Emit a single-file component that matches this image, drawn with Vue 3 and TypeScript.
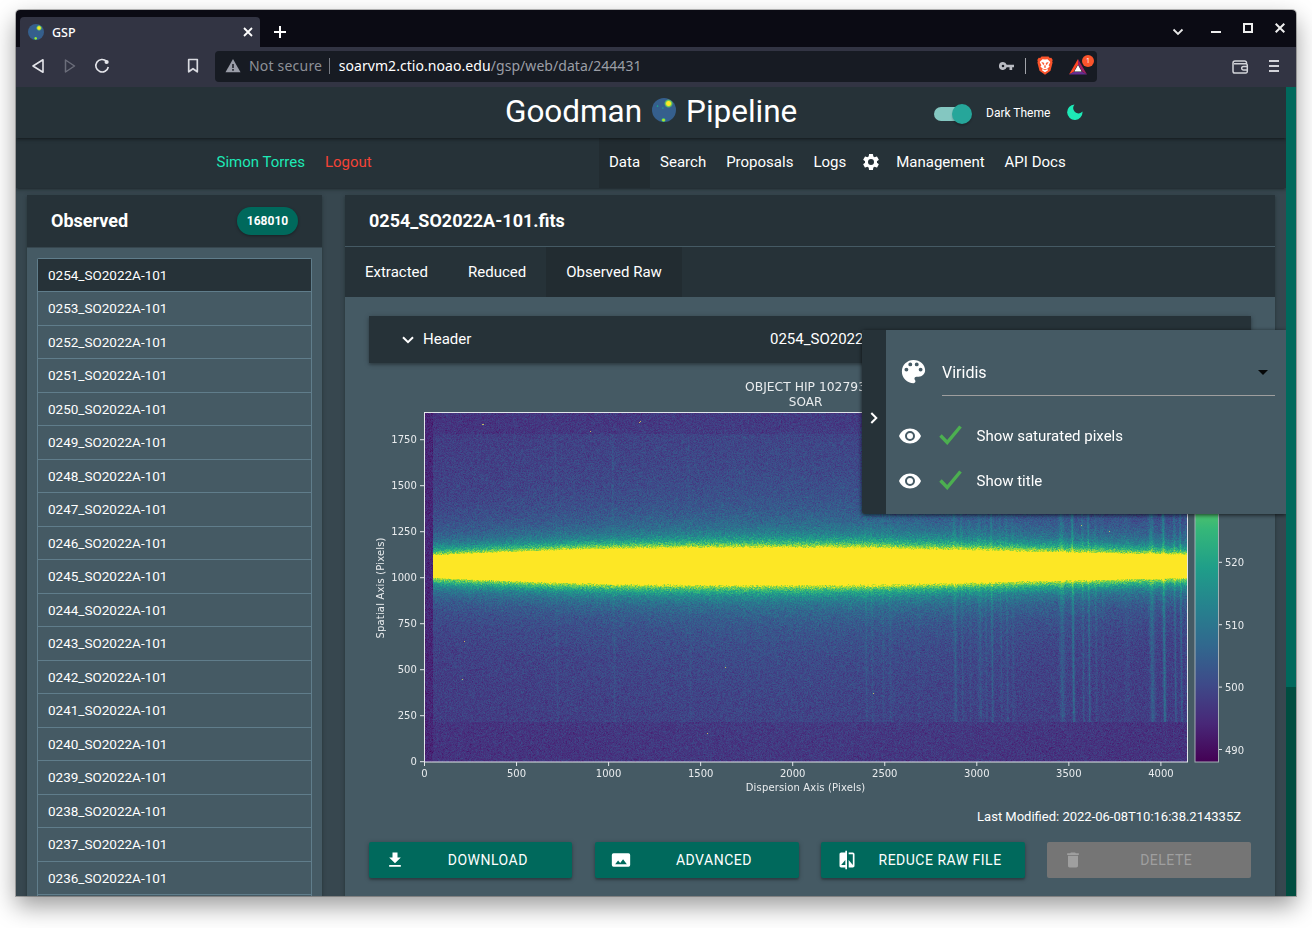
<script setup lang="ts">
import { onMounted, ref } from 'vue'

const files: string[] = Array.from({ length: 20 }, (_, i) => `0${254 - i}_SO2022A-101`)
const links = ['Data', 'Search', 'Proposals', 'Logs']
const tabs = ['Extracted', 'Reduced', 'Observed Raw']
const options = ['Show saturated pixels', 'Show title']

const xTicks = [0, 500, 1000, 1500, 2000, 2500, 3000, 3500, 4000].map((v) => ({ v, x: 55.5 + v * 0.1841 }))
const yTicks = [0, 250, 500, 750, 1000, 1250, 1500, 1750].map((v) => ({ v, y: 391.7 - v * 0.184 }))
const barTicks = [490, 500, 510, 520].map((v) => ({ v, y: 379.5 - (v - 490) * 6.24 }))

const viridis: number[][] = [
  [68, 1, 84], [72, 40, 120], [62, 74, 137], [49, 104, 142], [38, 130, 142],
  [31, 158, 137], [53, 183, 121], [109, 205, 89], [180, 222, 44], [253, 231, 37],
]
const stops = viridis.map((c, i) => ({ offset: i / 9, color: `rgb(${c.join(',')})` }))

// Sky lines: column, strength, half width
const skyLines: number[][] = [
  [132, 1.4, 1], [189, 1.5, 1.2], [265, 0.9, 1], [320, 0.6, 1], [441, 2, 1], [447, 1.8, 1],
  [458, 1.5, 1], [465, 1.5, 1.5], [493, 1, 1], [530, 3.4, 1.5], [537, 2.2, 1], [545, 1.5, 1],
  [555, 2.4, 2], [561, 2, 1], [567, 4.2, 1], [576, 2, 1], [582, 2.4, 1], [588, 1.8, 1],
  [637, 4, 2.4], [648, 6.6, 1.2], [658, 3, 1], [664, 4.8, 1], [671, 2.5, 1], [678, 1.3, 1],
  [702, 1, 3], [727, 4.8, 2.4], [739, 7.2, 1.4], [750, 4.4, 1], [756, 4.8, 1], [761, 1.5, 1],
]
const hotPixels: number[][] = [[57, 11], [58, 11], [165, 18], [215, 8], [214, 9], [39, 228], [37, 266], [448, 280], [656, 112], [684, 118], [300, 254], [282, 320]]

const canvas = ref<HTMLCanvasElement | null>(null)

onMounted(() => {
  const el = canvas.value
  const ctx = el?.getContext('2d')
  if (!el || !ctx) return
  const w = el.width
  const h = el.height
  let seed = 20220608
  const rnd = () => {
    seed = (seed * 1664525 + 1013904223) >>> 0
    return seed / 4294967296
  }
  const img = ctx.createImageData(w, h)
  for (let y = 0; y < h; y++) {
    const lit = y > 20 && y < 309
    for (let x = 0; x < w; x++) {
      const u = x / w
      const gauss = rnd() + rnd() + rnd() + rnd() - 2
      let v = 494
      let spread = 2.8
      if (x > 7) {
        const bell = Math.exp(-Math.pow((u - 0.5) / 0.4, 2))
        const half = x < 420 ? 11 + 7 * Math.sin((Math.min(x, 260) / 260) * Math.PI / 2)
          : 18 - 6.5 * Math.pow((x - 420) / 342, 1.1)
        const d = Math.abs(y - 153) - half
        v = (lit ? 497.4 : 495.8) + 0.6 * bell
        if (d <= 0) v = 580
        else {
          const glow = 25 * Math.exp(-d / 5.5) + (15 + 4 * bell) * Math.exp(-d / 19) + (1 + 4.5 * bell) * Math.exp(-d / 90)
          v += glow
          spread += glow * 0.1
        }
        if (lit) {
          const drift = (y - 150) / 110 - 1
          for (const [lx, s, hw] of skyLines) {
            const q = (x - lx - drift) / hw
            if (q > -3 && q < 3) v += s * 1.3 * Math.exp(-q * q)
          }
        }
      }
      const t = Math.min(1, Math.max(0, (v + gauss * spread - 488) / 56)) * 9
      const i = Math.min(8, Math.floor(t))
      const f = t - i
      const p = (y * w + x) * 4
      for (let k = 0; k < 3; k++) img.data[p + k] = viridis[i][k] + (viridis[i + 1][k] - viridis[i][k]) * f
      img.data[p + 3] = 255
    }
  }
  ctx.putImageData(img, 0, 0)
  ctx.fillStyle = 'rgba(226, 214, 90, .8)'
  for (const [x, y] of hotPixels) ctx.fillRect(x, y, 1, 1)
})
</script>

<template>
  <div class="desktop">
    <div class="window">
      <div class="strip">
        <div class="tab">
          <span class="orb small"></span>
          <span class="tab-name">GSP</span>
          <svg class="tab-close" width="10" height="10" viewBox="0 0 10 10"><path d="M1 1l8 8M9 1l-8 8" stroke="#fff" stroke-width="1.8" /></svg>
        </div>
        <svg class="plus" width="12" height="12" viewBox="0 0 12 12"><path d="M6 0v12M0 6h12" stroke="#fff" stroke-width="2" /></svg>
        <div class="controls">
          <svg width="12" height="8" viewBox="0 0 12 8" class="c-down"><path d="M1.5 1.5L6 6l4.500-4.500" stroke="#e8e8e8" stroke-width="1.8" fill="none" /></svg>
          <svg width="10" height="12" viewBox="0 0 10 12" class="c-min"><path d="M0 10h10" stroke="#eee" stroke-width="2" /></svg>
          <svg width="10" height="10" viewBox="0 0 10 10" class="c-max"><rect x="1" y="1" width="8" height="8" stroke="#eee" stroke-width="2" fill="none" /></svg>
          <svg width="10" height="10" viewBox="0 0 10 10" class="c-x"><path d="M.7.7l8.600 8.600M9.300.7L.7 9.300" stroke="#eee" stroke-width="2" /></svg>
        </div>
      </div>

      <div class="toolbar">
        <div class="nav-icons">
          <svg width="14" height="16" viewBox="0 0 14 16"><path d="M12 1.800v12.400L2 8z" fill="none" stroke="#e4e5ea" stroke-width="1.600" stroke-linejoin="round" /></svg>
          <svg width="14" height="16" viewBox="0 0 14 16"><path d="M2.500 2v12l9-6z" fill="none" stroke="#6b6d7a" stroke-width="1.500" stroke-linejoin="round" /></svg>
          <svg width="16" height="16" viewBox="0 0 16 16"><path d="M12.500 3.200A6.300 6.300 0 1 0 14.300 9" fill="none" stroke="#e4e5ea" stroke-width="1.600" /><circle cx="12.600" cy="4" r="2.100" fill="#e4e5ea" /></svg>
        </div>
        <svg class="bookmark" width="12" height="16" viewBox="0 0 12 16"><path d="M1.700 1.500h8.600v12.300L6 10.700l-4.300 3.100z" fill="none" stroke="#d9dae0" stroke-width="1.700" stroke-linejoin="round" /></svg>
        <div class="address">
          <svg width="16" height="14" viewBox="0 0 16 14"><path d="M8 0l7.500 13.300H.5z" fill="#9a9da8" /><path d="M8 5v4M8 10v1.700" stroke="#171b23" stroke-width="1.500" /></svg>
          <span class="insecure">Not secure</span>
          <i class="sep"></i>
          <span class="url"><b>soarvm2.ctio.noao.edu</b>/gsp/web/data/244431</span>
          <svg class="key" width="16" height="10" viewBox="0 0 16 10"><path fill="#b9bbc2" fill-rule="evenodd" d="M4 1a4 4 0 1 0 3.700 5.300H10.500V9h2.700V6.300H15V3.700H7.700A4 4 0 0 0 4 1zm0 2.700a1.300 1.300 0 1 1 0 2.600 1.300 1.300 0 0 1 0-2.600z" /></svg>
          <i class="sep light"></i>
          <svg class="lion" width="16" height="19" viewBox="0 0 16 19"><path d="M4.500.5h7l1.300 1.400 1.500-.1L15.700 4l-.5 1.500.4 1-2.100 8.200-5.500 4-5.500-4L.4 6.500l.4-1L.3 4l1.400-2.200 1.500.1z" fill="#fb542b" /><path d="M8 3.600l2.500-.4 2.800 2.700-1.700 3.400 1 1.500-2.400 1.800.8 1.600L8 16.200l-3-2 .8-1.600-2.400-1.800 1-1.500L2.700 5.900l2.800-2.700z" fill="#fff" /><path d="M4.700 6.300l2.300.8-.4 2zM11.300 6.300L9 7.100l.4 2zM8 9l.7 2.100L8 12l-.7-.9zM6 13l2 .9 2-.9" fill="#fb542b" stroke="#fb542b" stroke-width=".4" /></svg>
          <span class="bat">
            <svg width="18" height="16" viewBox="0 0 18 16"><path d="M9 0L0 15.500l4.500-2.500L9 5.200z" fill="#ff4724" /><path d="M9 0l9 15.500-4.500-2.500L9 5.200z" fill="#9e1f63" /><path d="M0 15.500h18L13.500 13h-9z" fill="#662d91" /><path d="M9 6l3.700 6.500H5.300z" fill="#fff" /></svg>
            <em>1</em>
          </span>
        </div>
        <svg class="wallet" width="17" height="14" viewBox="0 0 17 14"><g fill="none" stroke="#d2d3d9" stroke-width="1.500"><path d="M14.500 4V2.800A1.800 1.800 0 0 0 12.700 1H3a2 2 0 0 0-2 2v8.200A1.800 1.800 0 0 0 2.800 13h11a1.500 1.500 0 0 0 1.500-1.500V5.300A1.500 1.500 0 0 0 13.800 3.800H2" /><path d="M15.500 6.500h-4a1.800 1.800 0 0 0 0 3.600h4" /></g></svg>
        <svg class="menu" width="10" height="12" viewBox="0 0 10 12"><path d="M0 1h10M0 6h10M0 11h10" stroke="#d2d3d9" stroke-width="1.800" /></svg>
      </div>

      <div class="page">
        <div class="content">
          <header class="brand">
            <h1><span>Goodman</span><span class="orb"></span><span>Pipeline</span></h1>
            <div class="theme">
              <span class="switch"><span class="knob"></span></span>
              <span>Dark Theme</span>
              <svg class="moon" width="16" height="16" viewBox="0 0 16 16"><path d="M7.500.5A5 5 0 0 0 15.500 7.600 7.700 7.700 0 1 1 7.500.5z" fill="#1de9b6" /></svg>
            </div>
          </header>
          <nav class="menu-bar">
            <a class="user">Simon Torres</a>
            <a class="logout">Logout</a>
            <div class="links">
              <a v-for="(l, i) in links" :key="l" :class="{ active: i === 0 }">{{ l }}</a>
              <svg class="gear" width="20" height="20" viewBox="0 0 24 24"><path fill="#fff" d="M19.140 12.940c.04-.3.060-.61.060-.94 0-.32-.02-.64-.07-.94l2.030-1.580a.49.49 0 0 0 .12-.61l-1.920-3.320a.488.488 0 0 0-.59-.22l-2.390.96c-.5-.38-1.030-.7-1.620-.94l-.36-2.540a.484.484 0 0 0-.48-.41h-3.840c-.24 0-.43.17-.47.41l-.36 2.540c-.59.24-1.130.57-1.620.94l-2.390-.96c-.22-.08-.47 0-.59.22L2.740 8.870c-.12.21-.08.47.12.61l2.030 1.580c-.05.3-.09.63-.09.94s.02.64.07.94l-2.030 1.580a.49.49 0 0 0-.12.61l1.920 3.320c.12.22.37.29.59.22l2.390-.96c.5.38 1.030.7 1.620.94l.36 2.540c.05.24.24.41.48.41h3.840c.24 0 .44-.17.47-.41l.36-2.540c.59-.24 1.130-.56 1.620-.94l2.390.96c.22.08.47 0 .59-.22l1.920-3.320c.12-.22.07-.47-.12-.61l-2.010-1.580zM12 15.600A3.600 3.600 0 1 1 12 8.400a3.600 3.600 0 0 1 0 7.200z" /></svg>
              <a>Management</a>
              <a>API Docs</a>
            </div>
          </nav>

          <main class="columns">
            <aside class="card side">
              <div class="side-head"><h2>Observed</h2><span class="badge">168010</span></div>
              <ul>
                <li v-for="(f, i) in files" :key="f" :class="{ current: i === 0 }">{{ f }}</li>
              </ul>
            </aside>

            <section class="card detail">
              <h2 class="detail-head">0254_SO2022A-101.fits</h2>
              <div class="tabs"><a v-for="(t, i) in tabs" :key="t" :class="{ active: i === 2 }">{{ t }}</a></div>
              <div class="detail-body">
                <div class="collapse">
                  <svg width="12" height="8" viewBox="0 0 12 8"><path d="M1 1.200l5 5 5-5" stroke="#fff" stroke-width="2" fill="none" /></svg>
                  <span>Header</span>
                  <span class="file">0254_SO2022A-101.fits</span>
                </div>
                <div class="figure">
                  <canvas ref="canvas" width="762" height="349"></canvas>
                  <svg class="axes" width="882" height="430" viewBox="0 0 882 430">
                    <defs><linearGradient id="viridis" x1="0" y1="1" x2="0" y2="0"><stop v-for="s in stops" :key="s.offset" :offset="s.offset" :stop-color="s.color" /></linearGradient></defs>
                    <text class="title" x="436.500" y="20.500" textLength="121" lengthAdjust="spacingAndGlyphs" text-anchor="middle">OBJECT HIP 102793</text>
                    <text class="title" x="436.500" y="36" textLength="33.500" lengthAdjust="spacingAndGlyphs" text-anchor="middle">SOAR</text>
                    <rect x="55.500" y="42.500" width="763" height="349.500" fill="none" stroke="#e3e6ea" stroke-width="1" />
                    <g v-for="t in xTicks" :key="'x' + t.v"><path :d="`M${t.x} 392v4`" stroke="#e3e6ea" /><text :x="t.x" y="407" text-anchor="middle">{{ t.v }}</text></g>
                    <g v-for="t in yTicks" :key="'y' + t.v"><path :d="`M55 ${t.y}h-4`" stroke="#e3e6ea" /><text :x="47.800" :y="t.y + 3.700" text-anchor="end">{{ t.v }}</text></g>
                    <text x="436.500" y="421" textLength="119.500" text-anchor="middle">Dispersion Axis (Pixels)</text>
                    <text transform="translate(15 218) rotate(-90)" textLength="101" text-anchor="middle">Spatial Axis (Pixels)</text>
                    <rect x="826" y="42.500" width="23.500" height="349.500" fill="url(#viridis)" stroke="#a3adb3" />
                    <g v-for="t in barTicks" :key="'b' + t.v"><path :d="`M850 ${t.y}h3`" stroke="#e3e6ea" /><text x="856" :y="t.y + 4">{{ t.v }}</text></g>
                  </svg>
                </div>
                <p class="modified">Last Modified: 2022-06-08T10:16:38.214335Z</p>
                <div class="actions">
                  <button>
                    <svg width="20" height="20" viewBox="0 0 24 24"><path fill="#fff" d="M19 9h-4V3H9v6H5l7 7 7-7zM5 18v2h14v-2H5z" /></svg>
                    <span>DOWNLOAD</span>
                  </button>
                  <button>
                    <svg width="20" height="20" viewBox="0 0 24 24"><path fill="#fff" fill-rule="evenodd" d="M3 4h18a2 2 0 0 1 2 2v12a2 2 0 0 1-2 2H3a2 2 0 0 1-2-2V6a2 2 0 0 1 2-2zm2 13h14l-4.500-6-3.500 4.510-2.500-3.010z" /></svg>
                    <span>ADVANCED</span>
                  </button>
                  <button>
                    <svg width="20" height="20" viewBox="0 0 24 24"><path fill="#fff" d="M10 3H5c-1.100 0-2 .9-2 2v14c0 1.100.9 2 2 2h5v2h2V1h-2v2zm0 15H5l5-6v6zm9-15h-5v2h5v13l-5-6v9h5c1.100 0 2-.9 2-2V5c0-1.100-.9-2-2-2z" /></svg>
                    <span>REDUCE RAW FILE</span>
                  </button>
                  <button disabled>
                    <svg width="20" height="20" viewBox="0 0 24 24"><path fill="#9f9f9f" d="M6 19c0 1.100.9 2 2 2h8c1.100 0 2-.9 2-2V7H6v12zM19 4h-3.500l-1-1h-5l-1 1H5v2h14V4z" /></svg>
                    <span>DELETE</span>
                  </button>
                </div>
              </div>
            </section>
          </main>

          <div class="drawer">
            <div class="handle"><svg width="8" height="12" viewBox="0 0 8 12"><path d="M1.300 1l5 5-5 5" stroke="#fff" stroke-width="2" fill="none" /></svg></div>
            <div class="drawer-body">
              <div class="palette">
                <svg width="31" height="31" viewBox="0 0 24 24"><path fill="#fff" d="M12 3a9 9 0 0 0 0 18c.83 0 1.500-.67 1.500-1.500 0-.39-.15-.74-.39-1.010-.23-.26-.38-.61-.38-.99 0-.83.67-1.500 1.500-1.500H16c2.760 0 5-2.240 5-5 0-4.420-4.030-8-9-8zm-5.500 9a1.500 1.500 0 1 1 0-3 1.500 1.500 0 0 1 0 3zm3-4a1.500 1.500 0 1 1 0-3 1.500 1.500 0 0 1 0 3zm5 0a1.500 1.500 0 1 1 0-3 1.500 1.500 0 0 1 0 3zm3 4a1.500 1.500 0 1 1 0-3 1.500 1.500 0 0 1 0 3z" /></svg>
                <div class="select"><span>Viridis</span><svg width="10" height="5" viewBox="0 0 10 5"><path d="M0 0h10L5 5z" fill="#060809" /></svg></div>
              </div>
              <div v-for="o in options" :key="o" class="option">
                <svg width="24" height="24" viewBox="0 0 24 24"><path fill="#fff" d="M12 4.500C7 4.500 2.730 7.610 1 12c1.730 4.390 6 7.500 11 7.500s9.270-3.110 11-7.500c-1.730-4.390-6-7.500-11-7.500zM12 17a5 5 0 1 1 0-10 5 5 0 0 1 0 10zm0-8a3 3 0 1 0 0 6 3 3 0 0 0 0-6z" /></svg>
                <svg class="check" width="24" height="20" viewBox="0 0 24 20"><path d="M1.500 10.500l6.700 7L21.500 1.500" stroke="#4caf50" stroke-width="3.400" fill="none" /></svg>
                <span>{{ o }}</span>
              </div>
            </div>
          </div>
        </div>
        <div class="scroll"><div class="thumb"></div></div>
      </div>
    </div>
  </div>
</template>

<style>
body { background: #fff; overflow: hidden; }
</style>

<style scoped>
* { box-sizing: border-box; }
h1, h2, p, ul { margin: 0; padding: 0; }
svg { display: block; flex: none; }
.desktop { width: 1312px; height: 928px; padding: 10px 16px; overflow: hidden; font: 15px/1.5 Roboto, sans-serif; color: #fff; }
.window { width: 1280px; height: 886px; border-radius: 4px 4px 0 0; overflow: hidden; box-shadow: 0 0 0 1px rgba(0,0,0,.26), 0 10px 24px rgba(0,0,0,.4); }
.strip { height: 37px; background: #0b0b14; display: flex; align-items: flex-end; padding-left: 4px; font-family: "Noto Sans", sans-serif; }
.tab { width: 240px; height: 30px; background: #323443; border-radius: 4px 4px 0 0; display: flex; align-items: center; padding: 0 7px 0 8px; }
.tab-name { font-size: 12.500px; font-weight: 500; margin-left: 8px; flex: 1; padding-top: 2px; }
.plus { margin: 0 0 9px 14px; }
.controls { margin-left: auto; display: flex; height: 37px; padding-right: 11px; }
.c-down { margin: 18px 27.500px 0 0; }
.c-min { margin: 12px 22px 0 0; }
.c-max { margin: 13px 22px 0 0; }
.c-x { margin-top: 13px; }
.toolbar { height: 40px; background: #323443; display: flex; align-items: center; padding: 0 17px 2px 15px; font-family: "Noto Sans", sans-serif; }
.nav-icons { display: flex; gap: 17.500px; }
.bookmark { margin-left: 77px; }
.address { width: 882px; height: 31px; margin-left: 16px; background: #171b23; border-radius: 4px; display: flex; align-items: center; padding: 0 0 1px 10px; font-size: 14px; }
.insecure { margin: -1px 0 0 8px; color: #8e9198; letter-spacing: .2px; }
.sep { width: 1px; height: 16px; background: #777b84; margin: 0 8.500px 0 7px; }
.url { color: #9b9ea6; flex: 1; letter-spacing: .06px; margin-top: -1px; }
.url b { font-weight: 400; color: #fff; }
.sep.light { margin: 0 11px 0 10.500px; background: #a2a4aa; }
.bat { position: relative; margin: 2px 10px 0 16px; }
.bat em { position: absolute; left: 13px; top: -4px; width: 12px; height: 12px; border-radius: 50%; background: #fb542b; font: 7px/12px "Noto Sans", sans-serif; text-align: center; }
.wallet { margin: 2px 0 0 auto; }
.menu { margin-left: 20px; }
.page { display: flex; height: 809px; }
.scroll { width: 10px; background: #004d40; }
.thumb { height: 600px; background: #00695c; }
.content { width: 1270px; position: relative; background: #37474f; overflow: hidden; }
.brand, .menu-bar { background: #263238; box-shadow: 0 2px 2px rgba(0,0,0,.14), 0 3px 1px -2px rgba(0,0,0,.12), 0 1px 5px rgba(0,0,0,.2); position: relative; display: flex; }
.brand { height: 51px; z-index: 2; }
.brand h1 { font-size: 31.500px; font-weight: 400; line-height: 48px; margin: -2px 0 0 489px; display: flex; align-items: center; width: 429px; letter-spacing: -.03px; }
.orb { width: 24px; height: 24px; border-radius: 50%; margin: -4px 10px 0; background: radial-gradient(circle at 69% 23%, #fde725 0 2px, #6dcd59 3px, transparent 4.500px), radial-gradient(circle at 48% 92%, #b4de2c 0 1px, #35b779 1.600px, transparent 2.400px), radial-gradient(circle at 23% 34%, #1f9e89 0 .6px, transparent 1.200px), radial-gradient(circle at 45% 42%, #26828e 0 .6px, transparent 1.200px), #355f8d; }
.orb.small { width: 16px; height: 16px; margin: 0; background: radial-gradient(circle at 69% 25%, #fde725 0 1.300px, #6dcd59 2px, transparent 3px), radial-gradient(circle at 48% 90%, #b4de2c 0 .8px, #35b779 1.300px, transparent 1.800px), #355f8d; }
.theme { display: flex; align-items: center; font-size: 12px; gap: 17px; }
.switch { width: 36px; height: 14px; margin: 3px -1px 0 0; border-radius: 8px; background: #84c7c1; position: relative; }
.knob { position: absolute; right: -2px; top: -3px; width: 20px; height: 20px; border-radius: 50%; background: #26a69a; box-shadow: 0 2px 2px rgba(0,0,0,.2); }
.moon { margin: -1px 0 0 0; }
.menu-bar { height: 50px; line-height: 48px; z-index: 1; padding-left: 200.500px; }
.user { color: #1de9b6; }
.logout { color: #f44336; margin-left: 20px; }
.links { display: flex; position: absolute; left: 583px; top: 0; height: 50px; }
.links a { padding: 0 10px; }
.links a.active { background: #222c31; }
.gear { margin: 14px 5px 0 5px; }
.columns { display: flex; gap: 23px; padding: 7px 11px 0; }
.card { background: #455a64; box-shadow: 0 2px 2px rgba(0,0,0,.14), 0 1px 5px rgba(0,0,0,.2); height: 720px; }
.side { width: 295px; }
.side-head { height: 53px; background: #263238; border-bottom: 1px solid #37474f; display: flex; justify-content: space-between; align-items: center; padding: 0 24px; }
.side-head h2 { margin-top: -1px; }
h2 { font-size: 18px; font-weight: 700; }
.badge { width: 61px; height: 28px; border-radius: 14px; background: #00695c; font-size: 12px; font-weight: 700; line-height: 28px; text-align: center; box-shadow: 0 1px 3px rgba(0,0,0,.35); }
ul { list-style: none; margin: 9.600px 10px; border: 1px solid #607d8b; border-bottom: 0; border-radius: 2px; }
li { height: 33.500px; border-bottom: 1px solid #607d8b; padding-left: 10px; font-size: 13.500px; line-height: 33px; }
li.current { background: #263238; }
.detail { width: 930px; }
.detail-head { height: 52px; line-height: 52px; background: #263238; border-bottom: 1px solid #455a64; padding-left: 24px; }
.tabs { height: 50px; background: #263238; display: flex; line-height: 50px; }
.tabs a { padding: 0 20px; }
.tabs a.active { background: #222c31; }
.detail-body { padding: 19px 24px; }
.collapse { height: 47px; background: #263238; box-shadow: 0 2px 2px rgba(0,0,0,.14), 0 1px 5px rgba(0,0,0,.3); display: flex; align-items: center; padding-left: 33px; padding-bottom: 1px; }
.collapse span { margin-left: 9px; }
.collapse svg { margin-top: 2px; }
.collapse .file { position: absolute; left: 754px; margin: 0; }
.figure { height: 430px; margin-top: 7px; position: relative; }
canvas { position: absolute; left: 56px; top: 43px; }
.axes { position: absolute; left: 0; top: 0; }
.axes text { font: 10px "DejaVu Sans", sans-serif; fill: #e9ecee; }
.axes .title { font-size: 12px; }
.modified { text-align: right; padding-right: 10px; font-size: 13px; line-height: 20px; margin-top: 7px; }
.actions { display: grid; grid-template-columns: repeat(4, 1fr); gap: 22.500px; margin-top: 15px; }
button { height: 36px; border: 0; border-radius: 2px; background: #00695c; color: #fff; font: 14px Roboto, sans-serif; letter-spacing: .5px; display: flex; align-items: center; padding: 0 2px 0 16px; box-shadow: 0 2px 2px rgba(0,0,0,.2), 0 1px 5px rgba(0,0,0,.25); }
button:first-child { margin-right: 1px; padding-right: 1px; }
button span { flex: 1; text-align: center; }
button:disabled { background: #757575; color: #9f9f9f; box-shadow: none; }
.drawer { position: absolute; left: 846px; top: 243px; width: 424px; height: 184px; z-index: 3; display: flex; border-radius: 3px 0 0 3px; background: #455a64; box-shadow: 0 1px 4px rgba(0,0,0,.7); }
.handle { width: 24px; background: #263238; border-radius: 3px 0 0 3px; display: flex; align-items: center; justify-content: center; }
.handle svg { margin-top: -8px; }
.drawer-body { flex: 1; padding: 21px 11px 0 11.500px; }
.palette { display: flex; align-items: center; height: 45px; margin-bottom: 17px; }
.palette > svg { margin-top: -4px; }
.select { width: 333px; height: 45px; margin-left: 13.500px; border-bottom: 1px solid #9e9e9e; display: flex; align-items: center; justify-content: space-between; padding: 0 7px 1px 0; font-size: 16px; }
.option { height: 45px; display: flex; align-items: center; }
.option span { margin-top: 2px; }
.check { margin: -1px 14px 0 17px; }
</style>
